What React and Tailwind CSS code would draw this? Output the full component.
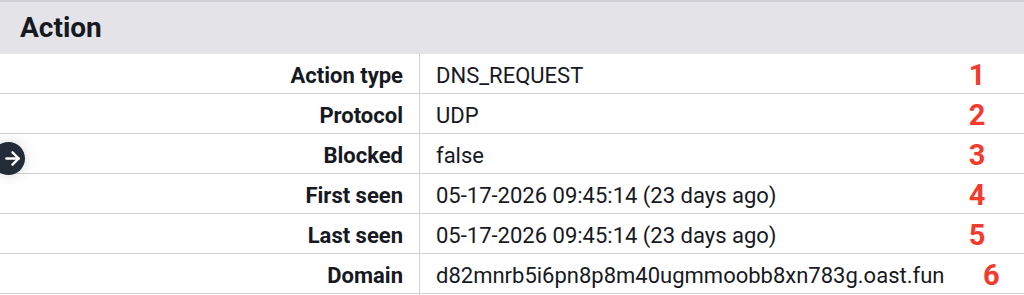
import React from 'react';
import { ArrowRight } from 'lucide-react';

const rows = [
  { label: 'Action type', value: 'DNS_REQUEST', n: 1 },
  { label: 'Protocol', value: 'UDP', n: 2 },
  { label: 'Blocked', value: 'false', n: 3 },
  { label: 'First seen', value: '05-17-2026 09:45:14 (23 days ago)', n: 4 },
  { label: 'Last seen', value: '05-17-2026 09:45:14 (23 days ago)', n: 5 },
  { label: 'Domain', value: 'd82mnrb5i6pn8p8m40ugmmoobb8xn783g.oast.fun', n: 6 },
];

export default function App() {
  return (
    <div
      className="relative w-[1024px] h-[295px] overflow-hidden bg-white text-[#16191f]"
      style={{ fontFamily: 'Roboto, "Liberation Sans", sans-serif' }}
    >
      {/* Section header */}
      <div className="h-[54px] border-t-2 border-[#cfcfd5] bg-[#e4e4e8] flex items-center px-5">
        <h2 className="text-[28px] font-bold leading-none">Action</h2>
      </div>

      {/* Key/value rows */}
      <div>
        {rows.map((row) => (
          <div
            key={row.label}
            className="grid grid-cols-[419px_1fr_94px] h-[40px] border-b border-[#d1d1d6]"
          >
            <div className="flex items-center justify-end pr-4 text-[22px] font-bold">
              {row.label}
            </div>
            <div className="flex items-center pl-4 border-l border-[#d1d1d6] text-[22px]">
              {row.value}
            </div>
            <div className="flex items-center justify-center text-[29px] font-bold text-[#f33a2d]">
              {row.n}
            </div>
          </div>
        ))}
      </div>

      {/* Floating expand button */}
      <div className="absolute left-[-8px] top-[142px] w-[33px] h-[33px] rounded-full bg-[#232b37] flex items-center justify-center shadow-[0_0_14px_rgba(0,0,0,0.16)]">
        <ArrowRight className="text-white ml-[7px]" size={21} strokeWidth={2.75} />
      </div>
    </div>
  );
}
